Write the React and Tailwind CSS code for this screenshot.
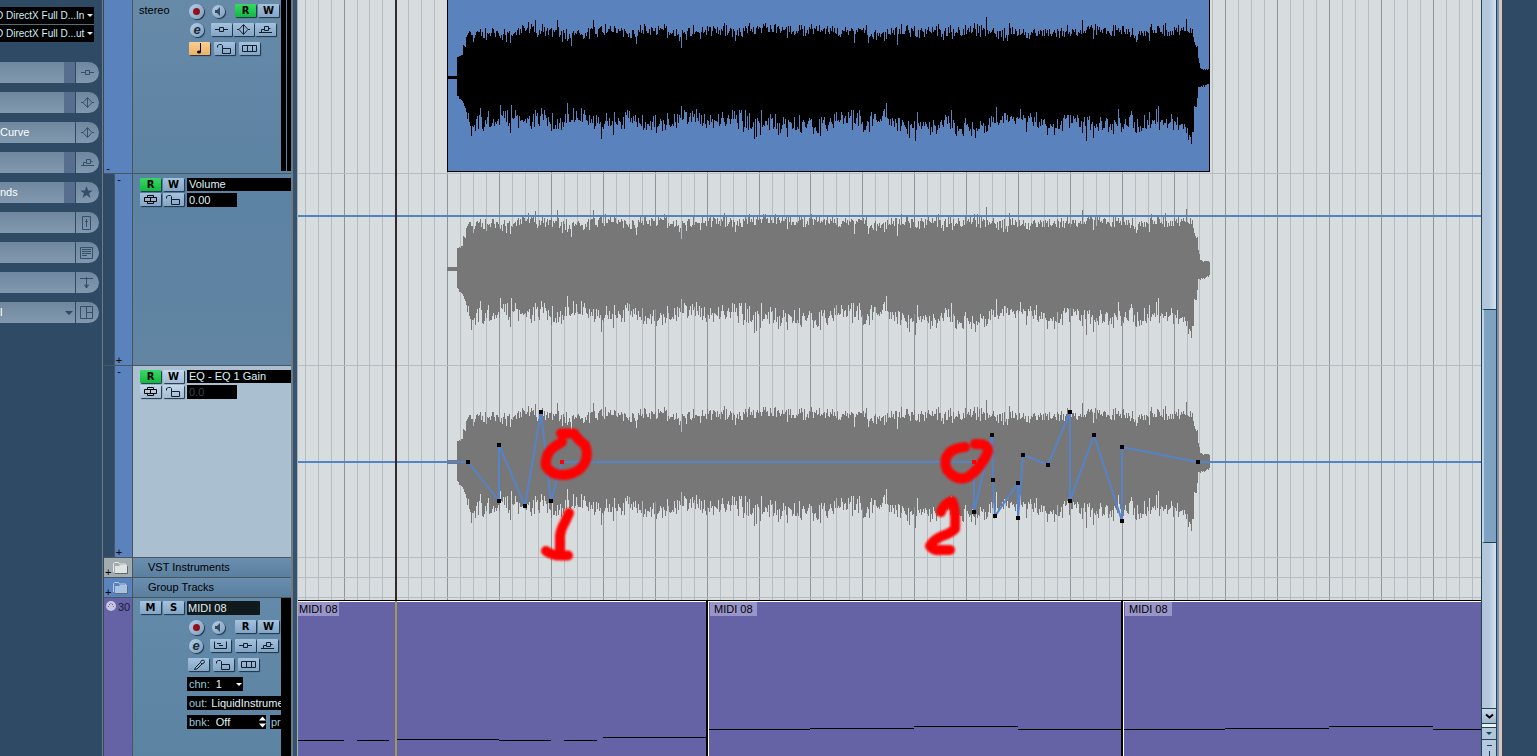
import { clsx } from "clsx";

const BEAT = 51.875;
const CENTER = 77;

// [x, y] anchors of the upper and lower edge of the recorded audio
const TOP = [
  [0, 76], [9, 76], [10, 57], [15, 54], [16, 46], [18, 46], [19, 37], [43, 32], [50, 36], [60, 34], [73, 31],
  [93, 31], [108, 32], [120, 35], [133, 33], [153, 31], [168, 30], [181, 32], [189, 38], [198, 28],
  [213, 30], [223, 33], [233, 36], [243, 33], [273, 30], [288, 31], [313, 28], [333, 30], [353, 30],
  [373, 31], [403, 33], [415, 29], [421, 37], [428, 34], [438, 35], [453, 29], [473, 32], [488, 30],
  [508, 32], [518, 29], [533, 30], [548, 33], [559, 35], [568, 33], [580, 37], [593, 31], [608, 35],
  [618, 33], [633, 30], [653, 28], [673, 30], [683, 31], [690, 37], [698, 31], [708, 30], [721, 34],
  [733, 29], [743, 32], [746, 37], [748, 46], [750, 46], [751, 59], [753, 69], [762, 70],
];
const BOTTOM = [
  [0, 78], [9, 78], [10, 96], [16, 103], [20, 115], [24, 125], [31, 119], [43, 122], [53, 119],
  [65, 115], [73, 119], [83, 121], [98, 118], [108, 121], [123, 120], [138, 116], [143, 122],
  [163, 124], [178, 122], [188, 117], [198, 125], [208, 124], [218, 120], [233, 118], [248, 115],
  [258, 122], [278, 123], [285, 119], [298, 121], [310, 125], [323, 123], [338, 125], [353, 127],
  [368, 126], [383, 124], [403, 117], [413, 122], [418, 128], [425, 118], [438, 117], [453, 127],
  [468, 123], [478, 125], [493, 127], [508, 126], [518, 125], [528, 127], [538, 123], [553, 122],
  [563, 120], [580, 116], [588, 124], [603, 126], [618, 121], [633, 125], [653, 128], [668, 124],
  [683, 121], [703, 124], [718, 120], [733, 125], [746, 132], [747, 107], [749, 107], [751, 87], [762, 84],
];

function valueAt(points, x) {
  const i = Math.max(1, points.findIndex(([px]) => px >= x));
  const [x0, y0] = points[i - 1];
  const [x1, y1] = points[i];
  return y0 + ((y1 - y0) * (x - x0)) / (x1 - x0);
}

function buildWave() {
  let seed = 4711;
  const rand = () => {
    seed = (seed * 1103515245 + 12345) % 2147483648;
    return seed / 2147483648;
  };
  const columns = [];
  for (let x = 0; x < 763; x++) {
    const inBody = x > 19 && x < 746;
    const jitter = (scale) => {
      const n = (rand() + rand() - 1) * 10;
      const pick = rand();
      const spike = rand() * 10;
      if (x < 10) return 0.5;
      if (!inBody) return n * 0.15;
      if (pick > 0.88) return (n + spike) * scale;
      if (pick < 0.08) return (n - spike) * scale;
      return n * scale;
    };
    columns.push([valueAt(TOP, x) - jitter(0.8) - CENTER, valueAt(BOTTOM, x) + jitter(1.2) - CENTER]);
  }
  return columns;
}

const WAVE = buildWave();

function wavePath(center, scale) {
  return WAVE.map(([top, bottom], x) => {
    const a = Math.round(center + top * scale);
    const b = Math.round(center + bottom * scale);
    return `M${x} ${a}h1V${b}h-1z`;
  }).join("");
}

function Waveform({ center, scale = 1, height, className }) {
  return (
    <svg width="763" height={height} className={clsx("block shrink-0", className)} shapeRendering="crispEdges">
      <path d={wavePath(center, scale)} fill="currentColor" />
    </svg>
  );
}

/* ---------- icons ---------- */

const ICONS = {
  insert: <path d="M4 6.5h4M13 6.5h4M8.500 4.500h4v4h-4z" />,
  eq: <path d="M10.500 2v9M4 6.500h2M15 6.500h2M10.500 1.500l-4.500 5 4.500 5 4.500-5z" />,
  send: <path d="M4 9.500h13M6.500 9.500v-3h3M13.500 5.500h2M9.500 3.500h4v4h-4z" />,
  lock: <path d="M3.500 5.500v-2l2-1h2l1 1v3M8.500 6.500h8v5h-8z" />,
  lanes: <path d="M3.500 3.500h14v6h-14zM8.500 3.500v6M13.500 3.500v6" />,
  inputs: <path d="M4.500 2.500v7h12v-7M7 4.500h4M9 6.500h4" />,
  layers: <path d="M7.500 2.500h6v2h-6zM4.500 4.500h6v4h-6zM10.500 4.500h6v4h-6zM7.500 8.500h6v2h-6z" stroke="#000" />,
  stick: <path d="M6.500 11.500l1-2 5-5 1.500 1.500-5 5zM12.500 4.500l1-2 2-.5 1 1.500-.5 1.500-2 1" />,
  note: (
    <>
      <path d="M11.500 1v9" stroke="#000" />
      <ellipse cx="10" cy="10" rx="2" ry="1.500" fill="#000" stroke="none" />
    </>
  ),
};

function Icon({ name }) {
  return (
    <svg viewBox="0 0 21 13" className="h-[13px] w-[21px] shrink-0" fill="none" stroke="currentColor">
      {ICONS[name]}
    </svg>
  );
}

const SIDE_ICONS = {
  star: <path d="M10.500 4l1.700 4.400h4.600l-3.700 2.800 1.400 4.800-4-2.900-4 2.900 1.400-4.800-3.700-2.800h4.600z" fill="currentColor" stroke="none" />,
  fader: <path d="M6.500 4.500h8v13h-8zM10.500 7v8M9 9.500h3" />,
  notes: <path d="M4.500 5.500h12v11h-12zM6 7.500h9M6 9.500h9M6 11.500h9M6 13.500h5" />,
  arrow: <path d="M4 6.500h13M10.500 5v11M9.500 6.500h2M8.500 13l2 3 2-3z" />,
  panel: <path d="M4.500 4.500h12v12h-12zM10.500 4.500v12M10.500 10.500h6" />,
};

function SideIcon({ name }) {
  return (
    <svg viewBox="0 0 21 21" className="h-[21px] w-[21px]" fill="none" stroke="currentColor">
      {ICONS[name] ? <g transform="translate(1 4)">{ICONS[name]}</g> : SIDE_ICONS[name]}
    </svg>
  );
}

/* ---------- inspector ---------- */

const SECTIONS = [
  { icon: "insert", label: "Inserts", mark: true },
  { icon: "eq", label: "Equalizers", mark: true },
  { icon: "eq", label: "Equalizer curve", text: "Curve" },
  { icon: "send", label: "Sends", mark: true },
  { icon: "star", label: "Studio sends", text: "nds", mark: true },
  { icon: "fader", label: "Channel" },
  { icon: "notes", label: "Notepad" },
  { icon: "arrow", label: "Quick controls" },
  { icon: "panel", label: "Panel", text: "l", menu: true },
];

function RoutingSelect({ label, text }) {
  return (
    <div className="flex h-[17px] items-center overflow-hidden bg-black pr-px">
      <select aria-label={label} className="-ml-1 h-full min-w-0 flex-1 appearance-none bg-transparent text-[10px] text-[#d5eef4]">
        <option>{text}</option>
      </select>
      <span className="pointer-events-none shrink-0 border-x-[3px] border-t-[3px] border-x-transparent border-t-[#d5eef4]" />
    </div>
  );
}

function Inspector() {
  return (
    <aside className="w-[102px] shrink-0 overflow-hidden bg-[#2e4a64]">
      <div className="mt-[7px] flex w-[94px] flex-col gap-px rounded-r-sm bg-[#4d7180]">
        <RoutingSelect label="Input routing" text="D DirectX Full D...In" />
        <RoutingSelect label="Output routing" text="D DirectX Full D...ut" />
      </div>
      <div className="mt-5 flex w-[99px] flex-col gap-[9px]">
        {SECTIONS.map(({ icon, label, text, mark, menu }) => (
          <button
            key={label}
            aria-label={label}
            className="flex h-[21px] overflow-hidden rounded-r-full bg-gradient-to-b from-[#70889f] to-[#8198ae] text-left text-[11px] text-white"
          >
            <span className="flex h-full flex-1 items-center">
              <span className="flex-1 pb-0.5">{text}</span>
              {mark && <span className="h-full w-[11px] bg-[#576e8e]" />}
              {menu && <span className="mr-0.5 border-x-[4px] border-t-[4px] border-x-transparent border-t-[#2e4a64]" />}
            </span>
            <span className="h-full w-6 border-l border-[#2e4a64] text-[#34506b]">
              <SideIcon name={icon} />
            </span>
          </button>
        ))}
      </div>
    </aside>
  );
}

/* ---------- track list ---------- */

const KEY = "flex h-[13px] w-[21px] shrink-0 items-center justify-center overflow-hidden rounded-[1px] shadow-[1px_1px_1px_#1d3245]";

function Key({ icon, label, letter, tone = "blue" }) {
  return (
    <button
      aria-label={label}
      className={clsx(
        KEY,
        "text-[#12202c]",
        tone === "blue" && "bg-gradient-to-b from-[#a5c2de] to-[#84a5c5]",
        tone === "pale" && "bg-gradient-to-b from-[#c3d9ec] to-[#a3bcd3]",
        tone === "green" && "bg-gradient-to-b from-[#35d866] to-[#0fb93f]",
        tone === "orange" && "bg-gradient-to-b from-[#fbce90] to-[#eeb263]",
      )}
    >
      {letter ? (
        <span className="font-['DejaVu_Sans',sans-serif] text-[10px] leading-[13px] font-bold text-black">{letter}</span>
      ) : (
        <Icon name={icon} />
      )}
    </button>
  );
}

const ROUND = "flex items-center justify-center rounded-full bg-gradient-to-br from-[#b4cfe8] to-[#7f9fbd] shadow-[1px_1px_1px_#1d3245]";

function RecordRow({ read }) {
  return (
    <div className="flex h-[19px] items-start">
      <button aria-label="Record enable" className={clsx(ROUND, "h-[15px] w-[15px]")}>
        <span className="h-[7px] w-[7px] rounded-full bg-[#94101a]" />
      </button>
      <button aria-label="Monitor" className={clsx(ROUND, "mt-px ml-2 h-[13px] w-[13px]")}>
        <svg viewBox="0 0 13 13" className="h-[13px] w-[13px]">
          <path d="M3 5h2l3-3v9l-3-3H3z" fill="#35495c" />
        </svg>
      </button>
      <div className="ml-2.5 flex gap-0.5">
        <Key label="Read automation" letter="R" tone={read ? "green" : "blue"} />
        <Key label="Write automation" letter="W" />
      </div>
    </div>
  );
}

function EditButton() {
  return (
    <button aria-label="Edit channel" className={clsx(ROUND, "mr-[7px] ml-0.5 h-[14px] w-[14px] pb-0.5 text-[13px] leading-none font-bold text-[#1d2c3a] italic")}>
      e
    </button>
  );
}

function AutomationPanel({ name, value, pale }) {
  return (
    <div className={clsx("flex flex-1 flex-col gap-0.5 pt-1 pl-[7px]", pale ? "bg-[#aabfd0]" : "bg-gradient-to-b from-[#5c82a4] to-[#6185a2]")}>
      <div className="flex h-[13px] gap-0.5">
        <Key label="Read automation" letter="R" tone="green" />
        <Key label="Write automation" letter="W" tone={pale ? "pale" : "blue"} />
        <select aria-label="Parameter" className="ml-px h-[13px] flex-1 appearance-none bg-black pl-0.5 text-[11px] leading-[13px] text-[#dff0f4]">
          <option>{name}</option>
        </select>
      </div>
      <div className="flex h-[14px] gap-0.5">
        <Key label="Mute automation" icon="layers" tone={pale ? "pale" : "blue"} />
        <Key label="Lock" icon="lock" tone={pale ? "pale" : "blue"} />
        <input
          aria-label={`${name} value`}
          defaultValue={value}
          className={clsx("ml-px h-[14px] w-[50px] bg-black pl-0.5 text-[11px] leading-[14px]", pale ? "text-[#3a444e]" : "text-[#dff0f4]")}
        />
      </div>
    </div>
  );
}

function AutomationTrack(props) {
  return (
    <div className="flex h-48 border-b border-[#47565f]">
      <div className="w-[10px] bg-[#2e4a64]" />
      <div className="flex w-[19px] flex-col justify-between border-x border-[#47565f] bg-[#5a82bd] text-[11px] leading-[10px] text-black">
        <button aria-label="Shrink lane" className="w-2">-</button>
        <button aria-label="Add lane" className="w-2">+</button>
      </div>
      <AutomationPanel {...props} />
    </div>
  );
}

function FolderTrack({ name, gray }) {
  return (
    <div className="flex h-5 border-b border-[#47565f]">
      <div className={clsx("flex w-[29px] items-end border-r border-[#47565f]", gray ? "bg-[#a2abb0]" : "bg-[#5a82bd]")}>
        <button aria-label={`Open ${name}`} className="ml-px text-[11px] leading-[10px] text-black">+</button>
        <svg viewBox="0 0 18 18" className="h-[18px] w-[18px]">
          <path d="M2.500 13V4.500l1-1h4l1 1.500h6V7" fill="none" stroke={gray ? "#e4e8e8" : "#b3cbe8"} />
          <path d="M4 14V7h4l1-1h7v8z" fill={gray ? "#dfe3e2" : "#a9c1e0"} />
          <path d="M4 14.500h12.500V7" fill="none" stroke="#5c6a74" />
        </svg>
      </div>
      <div className="flex flex-1 items-center bg-gradient-to-b from-[#6b8eae] to-[#5a7f9f] pb-0.5 pl-[15px] text-black">{name}</div>
    </div>
  );
}

function AudioTrack() {
  return (
    <div className="flex h-[174px] border-b border-[#47565f]">
      <div className="flex w-[29px] items-end border-r border-[#47565f] bg-[#5a82bd]">
        <button aria-label="Shrink track" className="w-2 text-[11px] leading-[10px] text-black">-</button>
      </div>
      <div className="flex flex-1 bg-gradient-to-b from-[#678aa9] to-[#5d83a2] pt-1 pl-1.5">
        <span className="w-[49px] leading-[12px] text-black">stereo</span>
        <div className="flex-1">
          <div className="pl-px">
            <RecordRow read />
          </div>
          <div className="flex h-[19px]">
            <EditButton />
            <div className="flex gap-px">
              <Key label="Insert state" icon="insert" />
              <Key label="Equalizer state" icon="eq" />
              <Key label="Send state" icon="send" />
            </div>
          </div>
          <div className="flex gap-1 pl-px">
            <Key label="Musical timebase" icon="note" tone="orange" />
            <Key label="Lock" icon="lock" />
            <Key label="Lane display" icon="lanes" />
          </div>
        </div>
        <Meter split />
      </div>
    </div>
  );
}

function Meter({ split }) {
  return (
    <div className={clsx("flex w-[10px] shrink-0 gap-px", split ? "-mt-1 mb-0.5" : "bg-black")}>
      <div className="w-[5px] bg-black" />
      <div className="flex-1 bg-black" />
    </div>
  );
}

function MidiTrack() {
  return (
    <div className="flex flex-1">
      <div className="flex w-[29px] items-start border-r border-[#47565f] bg-[#6562a5] pt-0.5">
        <svg viewBox="0 0 12 12" className="ml-px h-3 w-3 shrink-0">
          <circle cx="6" cy="6" r="5" fill="#c9c6e2" />
          <path d="M3 6.500h1M8 6.500h1M4 4.500h1M7 4.500h1M5.500 3.500h1" stroke="#6b68a0" />
        </svg>
        <span className="ml-px text-[#1c1a3c]">30</span>
      </div>
      <div className="flex min-w-0 flex-1 bg-gradient-to-b from-[#648aaa] to-[#5d83a2] pl-[7px]">
        <div className="min-w-0 flex-1 pt-[3px]">
          <div className="flex h-[19px] gap-0.5">
            <Key label="Mute" letter="M" />
            <Key label="Solo" letter="S" />
            <input aria-label="Track name" defaultValue="MIDI 08" className="ml-px h-[14px] w-[73px] rounded-[1px] bg-[#10191c] pl-px text-[11px] text-[#e4f2f4]" />
          </div>
          <div className="ml-[47px]">
            <div className="pl-0.5">
              <RecordRow />
            </div>
            <div className="flex h-[19px]">
              <EditButton />
              <Key label="Input transformer" icon="inputs" />
              <div className="ml-1 flex gap-px">
                <Key label="Insert state" icon="insert" />
                <Key label="Send state" icon="send" />
              </div>
            </div>
            <div className="flex h-[19px] gap-1 pl-px">
              <Key label="Drum map" icon="stick" />
              <Key label="Lock" icon="lock" />
              <Key label="Lane display" icon="lanes" />
            </div>
            <div className="flex flex-col gap-[5px] text-[#9fc3d4]">
              <label className="relative flex h-[14px] w-14 items-center gap-1.5 bg-black pl-0.5">
                chn:
                <select className="flex-1 appearance-none bg-black text-[#e4f2f4]">
                  <option>1</option>
                </select>
                <span className="pointer-events-none absolute right-px border-x-[3px] border-t-[3px] border-x-transparent border-t-white" />
              </label>
              <label className="flex h-[14px] items-center gap-1 overflow-hidden bg-black pl-0.5">
                out:
                <select className="w-[100px] shrink-0 appearance-none bg-black text-[#e4f2f4]">
                  <option>LiquidInstrume</option>
                </select>
              </label>
              <div className="flex gap-1 overflow-hidden">
                <label className="flex h-[14px] w-[79px] shrink-0 items-center gap-1.5 bg-black pl-0.5">
                  bnk:
                  <input defaultValue="Off" className="w-0 flex-1 bg-black text-[#e4f2f4]" />
                  <svg viewBox="0 0 7 12" className="h-3 w-[7px] shrink-0 fill-white">
                    <path d="M0 4.500l3.500-4L7 4.500zM0 7.500l3.500 4L7 7.500z" />
                  </svg>
                </label>
                <span className="flex h-[14px] flex-1 items-center bg-black pl-px">pr</span>
              </div>
            </div>
          </div>
        </div>
        <Meter />
      </div>
    </div>
  );
}

function TrackList() {
  return (
    <section className="flex w-[190px] shrink-0 flex-col border-x border-[#6f7a82] bg-[#2e4a64] pl-px">
      <AudioTrack />
      <AutomationTrack name="Volume" value="0.00" />
      <AutomationTrack name="EQ - EQ 1 Gain" value="0.0" pale />
      <FolderTrack name="VST Instruments" gray />
      <FolderTrack name="Group Tracks" />
      <MidiTrack />
    </section>
  );
}

/* ---------- arrangement ---------- */

function Grid() {
  const lines = [];
  for (let i = -11; i < 160; i++) {
    const x = Math.floor(149.8 + (i * BEAT) / 4);
    lines.push(<rect key={i} x={x} y="0" width="1" height="100%" fill={i % 4 === 0 ? "#8f9699" : "#b6bcc0"} />);
  }
  return (
    <svg className="absolute inset-0 h-full w-full" shapeRendering="crispEdges">
      {lines}
    </svg>
  );
}

// automation points, x from the left edge of the arrangement, y from the top of the lane
const POINTS = [
  [170, 96], [201, 135], [201, 79], [227, 140], [243, 46], [253, 135], [264, 96, true],
  [676, 96, true], [676, 146], [694, 69], [695, 114], [697, 150], [720, 117], [720, 152], [725, 89],
  [750, 99], [772, 46], [772, 135], [796, 69], [824, 155], [824, 81], [900, 96],
];

function EqAutomation() {
  return (
    <svg className="absolute inset-0 h-full w-full overflow-visible">
      <g stroke="#5583c8" strokeWidth="2" fill="none">
        <path d="M0 96H170" />
        <polyline points={POINTS.map(([x, y]) => `${x},${y}`).join(" ")} />
        <line x1="900" x2="100%" y1="96" y2="96" />
      </g>
      <filter id="soft" x="-20%" y="-20%" width="140%" height="140%">
        <feGaussianBlur stdDeviation="0.8" />
      </filter>
      <g filter="url(#soft)" stroke="#f00" strokeWidth="10" strokeLinecap="round" strokeLinejoin="round" fill="none">
        <path d="M263 67.500H276L281 74L287 79Q290 86 288 94Q284 104 275 107Q265 111 255 107Q246 101 248 95Q249 86 256 81L264 76" />
        <path d="M271 147L267 156Q261 166 262 175V183M248 185Q255 190 263 189.500H270" />
        <path d="M667 81Q656 82 651 87Q645 94 649 104Q659 116 670 111Q682 103 690 86Q691 77 677 78" />
        <path d="M643 146Q646 137 654 135Q658 142 657 163Q653 167 644 170Q635 174 632 180Q635 185 642 184H652" />
      </g>
      {POINTS.map(([x, y, hot]) => (
        <rect key={`${x}-${y}`} x={x - 2} y={y - 2} width="4" height="4" fill={hot ? "#f00" : "#000"} />
      ))}
    </svg>
  );
}

function MidiClip({ notes, first, className }) {
  return (
    <div className={clsx("relative overflow-hidden border-t border-white bg-[#6562a5]", !first && "border-l", className)}>
      <span
        className={clsx(
          "inline-block h-[14px] bg-[#9895c8] leading-[14px] whitespace-nowrap text-black",
          first ? "pr-px pl-px" : "ml-px pr-1 pl-1",
        )}
      >
        MIDI 08
      </span>
      <svg className="absolute inset-0 h-full w-full" shapeRendering="crispEdges">
        {notes.map(([x, y, w]) => (
          <rect key={x} x={x} y={y} width={w} height="1" />
        ))}
      </svg>
    </div>
  );
}

const LOOP = [[0, 127, 101], [101, 126, 104], [205, 124, 104], [309, 127, 110]];

function Arrangement() {
  return (
    <main className="relative flex min-w-0 flex-1 flex-col overflow-hidden bg-[#d7dcde]">
      <Grid />
      <div className="relative h-[174px] border-b border-[#b6bcc0]">
        <div className="ml-[149px] h-[172px] w-[763px] bg-[#5a83bd] shadow-[inset_1px_-1px_0_#000,inset_-1px_0_0_#000]">
          <Waveform center={77} height={171} className="text-black" />
        </div>
      </div>
      <div className="relative h-48 border-b border-[#b6bcc0]">
        <Waveform center={95} scale={1.03} height={191} className="ml-[149px] text-[#777777]" />
        <div className="absolute inset-x-0 top-[41px] h-0.5 bg-[#5583c0]" />
      </div>
      <div className="relative z-10 h-48 border-b border-[#b6bcc0]">
        <Waveform center={96} scale={1.03} height={191} className="ml-[149px] text-[#777777]" />
        <EqAutomation />
      </div>
      <div className="relative h-5 border-b border-[#b6bcc0]" />
      <div className="relative h-5 border-b border-[#b6bcc0]" />
      <div className="relative mt-0.5 flex flex-1 gap-0.5 border-t border-black bg-black">
        <MidiClip
          first
          className="w-[408px]"
          notes={[[0, 138, 46], [59, 138, 32], [98, 137, 103], [201, 138, 52], [266, 138, 33], [305, 135, 103]]}
        />
        <MidiClip className="w-[413px]" notes={LOOP} />
        <MidiClip className="flex-1" notes={LOOP} />
        <div className="absolute top-0 bottom-0 left-[97px] w-0.5 bg-[#9b9a58]" />
      </div>
      <div className="absolute top-0 left-[97px] z-10 h-[600px] w-0.5 bg-[#33292b]" />
    </main>
  );
}

function Scrollbar() {
  const track = "bg-gradient-to-r from-[#b4c5da] via-[#b4c7dd] to-[#d3e2ee]";
  return (
    <div className="flex w-4 shrink-0 flex-col border-x border-[#1f4552]">
      <div className={clsx("h-[309px]", track)} />
      <div className="h-[234px] border-y border-l-2 border-y-[#1f4552] border-l-[#bcd3e8] bg-[#80a2c2]" />
      <div className={clsx("flex-1", track)} />
      <button aria-label="Scroll down" className="flex h-4 items-center justify-center border-y border-[#1f4552] bg-gradient-to-b from-[#c9daea] to-[#9fb6cd]">
        <svg viewBox="0 0 9 7" className="h-[7px] w-[9px]" fill="none" stroke="#000" strokeWidth="2">
          <path d="M1 1.500l3.500 3 3.500-3" />
        </svg>
      </button>
      <div className="h-[3px] bg-[#edf1f6]" />
      <button aria-label="Zoom menu" className="flex h-[13px] items-center justify-center border-y border-[#1f4552] bg-[#afc6db]">
        <span className="border-x-[3px] border-t-[3px] border-x-transparent border-t-[#203c50]" />
      </button>
      <button aria-label="Zoom out" className="flex h-4 flex-col items-center gap-[5px] bg-[#b5cade] pt-[5px]">
        <span className="h-px w-[5px] bg-[#203c50]" />
        <span className="h-[5px] w-px bg-[#203c50]" />
      </button>
    </div>
  );
}

export default function App() {
  return (
    <div className="flex h-screen overflow-hidden bg-[#2e4a64] font-['Liberation_Sans',Arial,sans-serif] text-[11px] leading-[14px]">
      <Inspector />
      <TrackList />
      <div className="w-[6px] shrink-0 border-r border-l border-r-[#a8b0b5] border-l-[#6f7a82] bg-[#35536f]" />
      <Arrangement />
      <Scrollbar />
      <div className="w-[6px] shrink-0 border-r border-l-2 border-r-[#4b3f45] border-l-[#7f8dab] bg-[#d0c9ca]" />
      <div className="w-[34px] shrink-0" />
    </div>
  );
}
